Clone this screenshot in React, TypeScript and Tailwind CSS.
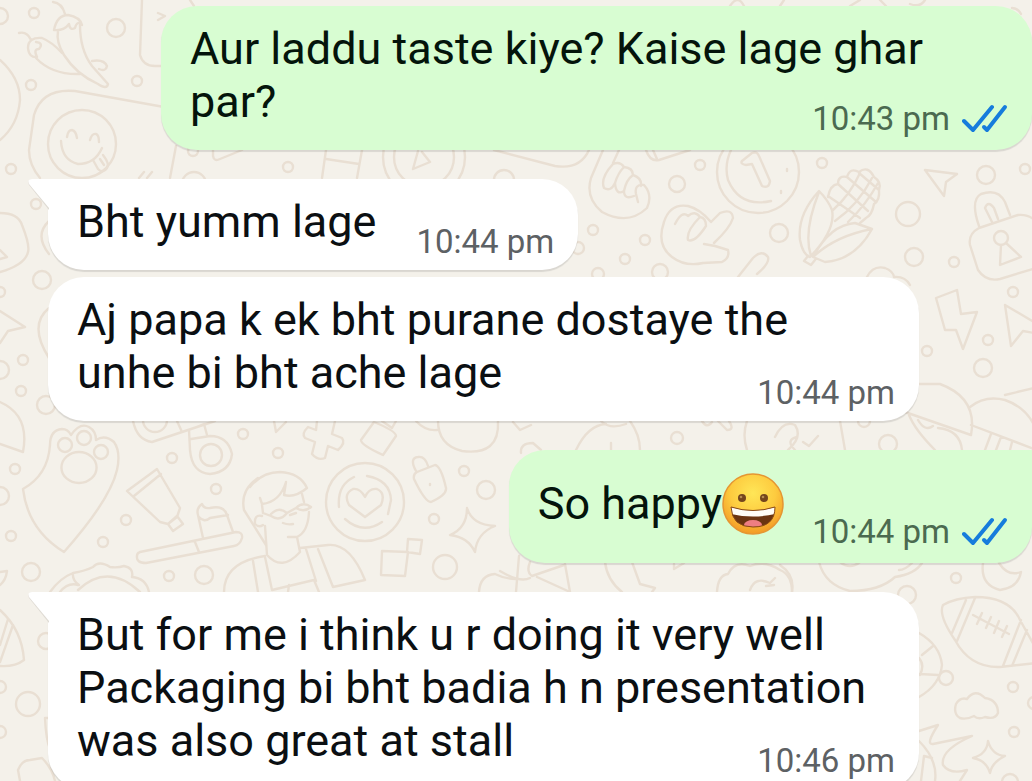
import React from 'react';

interface Message {
  id: number;
  lines: string[];
  time: string;
  outgoing?: boolean;
  tail?: boolean;
  emoji?: boolean;
}

const messages: Message[] = [
  { id: 1, lines: ['Aur laddu taste kiye? Kaise lage ghar', 'par?'], time: '10:43 pm', outgoing: true },
  { id: 2, lines: ['Bht yumm lage'], time: '10:44 pm', tail: true },
  { id: 3, lines: ['Aj papa k ek bht purane dostaye the', 'unhe bi bht ache lage'], time: '10:44 pm' },
  { id: 4, lines: ['So happy'], time: '10:44 pm', outgoing: true, tail: true, emoji: true },
  {
    id: 5,
    lines: ['But for me i think u r doing it very well', 'Packaging bi bht badia h n presentation', 'was also great at stall'],
    time: '10:46 pm',
    tail: true,
  },
];

// cx, cy, r
const dots: [number, number, number][] = [
  [0, 16, 8], [34, 13, 5], [116, 28, 9], [31, 85, 5], [137, 81, 5], [11, 169, 5], [82, 144, 34],
  [193, 151, 5], [288, 167, 5], [194, 184, 12], [424, 157, 41], [424, 157, 30], [504, 180, 10],
  [677, 184, 8], [593, 230, 5], [645, 240, 5], [625, 259, 5], [660, 272, 8], [578, 248, 6], [598, 274, 6],
  [700, 165, 5], [758, 172, 41], [822, 163, 5], [779, 233, 9], [986, 175, 9], [1025, 169, 5],
  [908, 214, 12], [914, 257, 9], [954, 262, 5], [1013, 292, 5], [988, 340, 5], [1001, 238, 7],
  [36, 204, 5], [42, 280, 9], [23, 360, 5], [0, 370, 9], [21, 391, 5], [46, 405, 9], [0, 292, 5],
  [65, 445, 7], [84, 438, 7], [101, 452, 7], [15, 469, 5], [0, 496, 9], [11, 536, 5], [31, 572, 9],
  [126, 520, 5], [103, 542, 5], [172, 458, 5], [216, 489, 5], [243, 434, 5], [169, 576, 5], [204, 575, 9],
  [155, 420, 12], [211, 455, 11], [365, 502, 39], [278, 453, 5], [464, 471, 5], [486, 490, 9],
  [434, 519, 5], [445, 567, 12], [677, 438, 6], [888, 444, 9], [864, 421, 6], [956, 578, 5],
  [907, 595, 9], [1013, 687, 5], [1014, 732, 5], [1034, 703, 6], [1010, 782, 8], [946, 678, 7],
  [46, 641, 8], [28, 704, 12], [0, 687, 6], [0, 732, 6], [927, 351, 5], [983, 368, 9],
];

const doodles: string[] = [
  // chillies
  'M53 2Q62 3 65 14M54 30Q57 15 68 15Q80 17 82 25Q77 20 75 28Q70 31 69 24Q64 31 54 30M80 25Q80 50 92 66L108 84Q107 90 98 84Q76 74 64 55Q56 42 58 31',
  'M19 33Q27 31 31 40M28 48Q28 37 42 38Q52 42 62 53M28 48Q29 58 37 57Q33 49 39 49Q44 43 36 42M36 58Q52 75 80 74M92 61Q104 59 107 66Q106 72 99 69',
  'M142 0L140 55Q143 66 155 66H164M158 13L165 16L158 20M190 0L194 6M0 60Q20 78 20 100Q18 125 0 140',
  // sticker face
  'M40 178Q29 165 29 150L34 115Q42 88 75 91L164 107M176 146L170 178M67 137Q68 130 72 130Q76 131 77 138M90 140Q92 133 96 134Q99 135 99 142M61 141Q62 160 78 164Q95 164 102 148M93 160L98 169Q103 174 107 168Q110 164 103 155M100 159L104 165',
  'M213 150V156Q214 162 220 159L242 150M139 178L144 172M147 178L152 172M326 150L322 178M326 159L359 164M362 150L357 178M418 151L413 169L430 162L422 152',
  // fist
  'M494 150L555 166Q580 170 589 150M603 150L591 178Q585 198 602 212Q628 226 647 208Q653 195 644 185Q634 184 636 194L638 202M619 150L613 163M613 164Q600 178 604 188Q611 192 615 183Q616 196 624 191Q624 200 634 196M613 164Q620 161 624 167Q618 173 615 183M624 167Q633 168 633 175Q626 180 624 191M633 175Q642 178 641 186M646 150Q650 162 659 160L690 150M653 150L657 159',
  // pointing hand
  'M688 206Q670 203 664 222Q656 245 672 257Q685 267 703 263L722 262Q730 258 728 250L715 246L704 244M711 222L720 213Q732 208 733 218Q730 228 714 243M688 206Q700 209 711 222M675 224Q682 210 688 216Q695 210 700 217Q706 218 706 226M700 217Q686 231 688 240Q695 243 706 226M738 277L753 258Q762 249 768 257Q770 263 757 274',
  // clock
  'M771 201Q740 208 728 180Q724 165 731 150M742 161L752 153Q757 151 759 156L770 181Q769 189 762 186L752 164L746 165Q740 164 742 161ZM787 169V171M781 191V193',
  // corn
  'M819 191Q797 215 800 240Q803 255 810 257Q836 230 832 210Q828 200 819 191ZM819 192Q803 232 811 256M813 257Q830 225 855 223L872 229Q855 260 825 262ZM813 257Q835 236 872 229M808 256L804 261L811 265L815 260',
  'M828 197Q830 185 838 184Q838 175 847 177Q850 167 859 172Q868 165 874 177Q882 182 879 190Q880 200 874 204Q872 215 866 218L860 223M828 196L860 218M838 184L868 211M847 177L876 202M859 173L879 190M833 210Q850 195 860 173M835 221Q858 205 872 178M848 222Q866 205 878 183',
  // plane, padlock, bolt
  'M925 170L957 174L946 182L944 196ZM979 228L1018 215Q1030 214 1036 222M979 228Q968 234 970 245L978 270Q986 282 1000 279L1036 268M979 226Q970 200 981 194Q998 188 1005 202L1010 215M992 222L985 208Q988 200 994 208L998 219M1001 245L1000 265L1021 257L1006 243',
  'M936 298L957 290L961 314L977 312L963 349L956 330L945 330ZM1005 305L1034 322M1005 305L1011 346L1023 331L1034 333M867 277Q873 265 885 268Q893 271 894 277Q905 276 910 285',
  'M0 213Q18 213 22 225Q30 245 28 252Q25 265 0 272M0 250L7 257L0 259M0 311L25 327L8 331L0 343M49 221Q34 235 49 254M49 308Q28 325 49 358M0 402Q30 415 23 452L0 444',
  // paw
  'M23 489Q48 475 50 445Q50 430 62 429Q68 429 71 435Q80 422 89 427Q96 431 96 440Q105 434 114 442Q121 452 117 470Q110 500 64 552Q28 530 23 489ZM79 452A17 15 0 1 0 79 483A17 15 0 1 0 79 452',
  'M133 421Q137 440 152 442L215 421M177 421L182 432M189 430L190 450Q192 473 210 474Q230 472 232 454Q228 436 210 436L191 439M189 430L204 424L207 435',
  // tube and brush
  'M127 491L157 469L180 508L177 517L168 524L160 522ZM134 496L161 474M168 524L177 516L183 524L173 531ZM140 552L236 532Q243 532 242 538Q240 545 234 546L146 563Q136 563 137 556Q137 553 140 552M195 542L199 552M203 538L198 515Q196 508 202 504Q204 509 210 508Q224 505 227 515L233 532M199 517Q204 523 210 518L228 515',
  'M0 572L7 571Q6 580 0 585M50 592Q60 578 73 573Q85 571 93 567Q99 560 110 567Q118 568 124 566Q134 568 132 577Q146 578 149 592M78 590Q108 562 140 592M60 592Q68 582 78 585M73 573Q72 580 79 585',
  // man with glasses
  'M250 487Q262 472 280 472Q300 473 307 488Q295 498 284 495L286 482Q280 502 262 504L260 498M262 505L263 513M271 514Q279 506 287 513Q280 522 271 516L263 513M287 513L296 508Q303 501 311 507Q304 513 296 508M262 516Q254 514 255 524Q259 528 263 525M265 526L267 555Q282 572 300 552L297 537M309 512Q308 532 297 537H288M290 515L296 513M283 523Q288 525 293 524M302 494L304 502',
  'M300 548L328 545Q350 543 365 580L333 587L318 549M306 549L316 581M265 556Q224 562 224 592M253 561L258 592M265 557L272 590L314 580L319 592M288 592L289 585M258 478Q240 490 244 510L266 545',
  'M339 507Q337 485 354 477M367 476Q390 480 391 500L388 514M345 519Q363 535 382 522M365 497Q360 488 353 489Q343 494 349 505L365 517L381 505Q386 493 377 489Q369 488 365 497Z',
  'M317 421L316 430L308 427Q301 434 305 438L315 442L312 454Q318 461 325 458L328 446L338 450Q346 443 342 438L332 434L335 421M374 422L361 440Q361 445 383 455L396 436Q396 431 374 422M382 421L392 428L396 421M274 421L276 432L286 422M416 421Q425 431 437 430M438 421Q438 445 462 451Q500 456 498 421',
  // key tag, squares, star
  'M417 472L435 465Q441 466 446 488Q447 495 431 502Q425 502 414 479Q413 474 417 472ZM416 471Q409 458 418 457Q425 456 428 466M430 484V485M382 551L408 552L405 576L381 575ZM408 539L422 540L420 554L407 552ZM467 508Q472 525 495 526Q477 533 475 552Q468 537 450 535Q467 528 467 508Z',
  'M479 592Q480 575 495 574Q505 579 516 579M519 556L516 592M513 422L520 430L531 425M521 453Q520 443 533 443L541 450M576 450Q588 425 606 424M601 421Q610 430 626 424M630 421Q640 435 640 450M611 443V450M702 421Q707 429 712 422M718 421L727 430Q735 430 729 421M747 421Q742 435 747 450M775 437Q783 420 795 425Q803 437 788 450M795 450Q785 440 797 437',
  'M500 571Q520 583 530 578M530 562Q526 572 532 576L564 565M537 577L570 592M565 564L570 592M605 562Q607 580 622 592M632 562L640 584L655 588L652 592M674 564V569L684 563M717 592Q718 575 728 574Q735 560 750 566Q765 560 780 570Q792 575 792 592M750 590Q755 576 770 583L775 578M774 585L766 586',
  'M840 421L845 450M803 442L809 446L818 436M909 415Q915 430 935 450M905 412L971 435Q978 398 940 384H919M970 407Q985 395 1005 400Q1025 407 1034 425M971 425L1034 449M918 420Q925 432 933 426M938 428Q960 430 962 450M985 450L991 434M996 450L1001 437M1010 450L1012 442M1034 388L1005 395',
  'M780 565Q795 575 792 592M819 562Q825 585 850 591Q880 591 895 577Q915 574 922 563M899 570Q905 570 912 563M840 562Q850 570 860 562M983 563Q980 585 1000 590Q1018 588 1021 572Q1008 577 999 563',
  // rugby ball
  'M943 605Q955 598 975 597Q1010 597 1020 620L1034 645M943 605Q938 615 955 640Q970 668 1000 667L1036 663M966 600L952 633M975 598L957 641M1021 620L1003 666M1027 630L1012 666M973 615L1009 634M982 613L977 624M991 617L986 628M999 621L994 633M1007 626L1002 637',
  'M960 718Q953 714 956 704Q960 697 967 699Q975 688 985 698Q998 700 998 713Q995 720 985 717Q978 720 974 716Q966 720 960 718ZM988 741Q992 755 1005 756Q992 762 990 773Q986 760 973 758Q987 754 988 741ZM919 633Q940 645 942 665Q940 685 919 697M919 658Q925 665 920 675M922 655L933 646M920 674L938 675M919 731L938 725Q925 745 933 744L972 736Q940 750 943 765Q950 775 967 770L960 781M919 741Q938 760 935 781M921 781L924 756L932 758',
  'M0 610Q22 630 24 660Q15 667 0 666M8 619L0 645M13 625L0 662M20 781L18 770Q22 760 30 760L42 758Q52 768 55 781M48 718H45Q46 740 50 749M730 6Q738 -6 744 6M780 6L784 0M850 6L860 0M880 0L886 6M910 4Q920 8 925 0M1012 8Q1018 8 1021 14',
];

const Wallpaper = () => (
  <svg
    aria-hidden="true"
    viewBox="0 0 1032 781"
    preserveAspectRatio="xMinYMin slice"
    className="absolute inset-0 h-full w-full fill-none stroke-[#e9dfd3]"
    strokeWidth="2.4"
    strokeLinecap="round"
    strokeLinejoin="round"
  >
    {dots.map(([cx, cy, r], i) => (
      <circle key={i} cx={cx} cy={cy} r={r} />
    ))}
    {doodles.map((d, i) => (
      <path key={i} d={d} />
    ))}
  </svg>
);

const ReadTicks = () => (
  <svg role="img" aria-label="Read" width="46" height="30" viewBox="0 0 46 30" className="shrink-0 fill-none stroke-[#167cdc]" strokeWidth="4" strokeLinecap="round" strokeLinejoin="round">
    <path d="M2 17L11 26L30 3" />
    <path d="M22 23L25 26L43 3" />
  </svg>
);

const GrinningFace = () => (
  <svg role="img" aria-label="Grinning face" width="62" height="62" viewBox="0 0 62 62" className="inline-block align-[-16px]">
    <defs>
      <radialGradient id="face" cx="50%" cy="32%" r="68%">
        <stop offset="0" stopColor="#ffe657" />
        <stop offset="0.55" stopColor="#fdcb3f" />
        <stop offset="1" stopColor="#f39a25" />
      </radialGradient>
      <clipPath id="mouth">
        <path d="M9 34Q31 41 53 34Q53 54 31 54Q10 54 9 34Z" />
      </clipPath>
    </defs>
    <circle cx="31" cy="31" r="30" fill="url(#face)" stroke="#e59632" strokeWidth="1.5" />
    <circle cx="20" cy="25" r="4" fill="#74451d" />
    <circle cx="42" cy="25" r="4" fill="#74451d" />
    <circle cx="19" cy="24" r="1.3" fill="#b58a4f" />
    <circle cx="41" cy="24" r="1.3" fill="#b58a4f" />
    <g clipPath="url(#mouth)">
      <rect x="8" y="32" width="46" height="24" fill="#6b3511" />
      <path d="M9 33Q31 40 53 33V41Q31 46 9 41Z" fill="#fffdf6" />
      <ellipse cx="31" cy="52" rx="9" ry="5" fill="#ee7e82" />
    </g>
    <path d="M9 34Q31 41 53 34Q53 54 31 54Q10 54 9 34Z" fill="none" stroke="#8a4a14" strokeWidth="1" />
  </svg>
);

const Tail = () => (
  <svg aria-hidden="true" width="21" height="32" viewBox="0 0 21 32" className="absolute -left-5 top-0">
    <path d="M21 31L1 6Q-1 1 4 0H21Z" fill="#dfdbd4" />
    <path d="M21 29L1 5Q-1 0 4 0H21Z" fill="#fff" />
  </svg>
);

const Bubble: React.FC<{ message: Message }> = ({ message }) => {
  const { lines, time, outgoing, tail, emoji } = message;
  const multiline = lines.length > 1;
  const lastLine = lines[lines.length - 1];

  const side = outgoing ? 'self-end bg-[#d8fdd2] text-[#04140b]' : 'ml-12 self-start bg-white text-[#0b0f12]';
  const corner = tail ? (outgoing ? 'rounded-[36px] rounded-tr-none' : 'rounded-[36px] rounded-tl-none') : 'rounded-[36px]';
  const width = multiline ? 'w-full max-w-[871px]' : '';
  const gap = outgoing ? 'gap-7' : 'gap-10';

  return (
    <article className={`relative pl-[29px] pr-6 pt-4 text-[45px] shadow-[0_2px_1px_#0000001c] ${emoji ? 'leading-[75px]' : 'leading-[53px]'} ${side} ${corner} ${width}`}>
      {tail && !outgoing && <Tail />}
      {lines.slice(0, -1).map((line) => (
        <p key={line}>{line}</p>
      ))}
      <div className={`flex items-end justify-between ${gap}`}>
        <p className="pb-[22px]">
          {lastLine}
          {emoji && <GrinningFace />}
        </p>
        <div className={`flex shrink-0 items-center gap-3 text-[33px] leading-10 ${outgoing ? 'pb-[11px] text-[#4b6a50]' : 'pb-2 text-[#5d6164]'}`}>
          <time>{time}</time>
          {outgoing && <ReadTicks />}
        </div>
      </div>
    </article>
  );
};

export default function App() {
  return (
    <main className="relative h-screen overflow-hidden bg-[#f4f1ea] font-[Roboto,sans-serif]">
      <Wallpaper />
      <section aria-label="Conversation" className="relative flex flex-col pt-1.5">
        {messages.map((m, i) => (
          <div key={m.id} className={`flex flex-col ${i === 0 ? '' : m.tail ? 'mt-[29px]' : 'mt-[7px]'}`}>
            <Bubble message={m} />
          </div>
        ))}
      </section>
    </main>
  );
}
